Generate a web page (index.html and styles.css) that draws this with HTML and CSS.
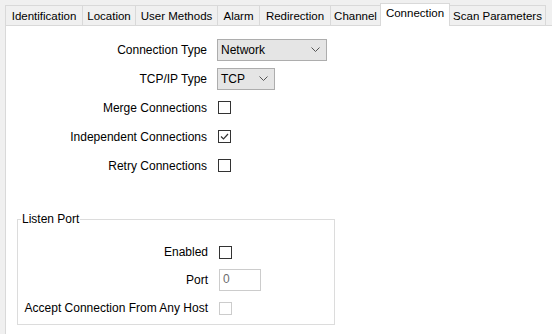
FILE: index.html
```html
<!DOCTYPE html>
<html lang="en">
<head>
  <meta charset="UTF-8">
  <title>Connection</title>
  <link rel="stylesheet" href="styles.css">
</head>
<body>
  <div class="tabs">
    <div class="tab">Identification</div>
    <div class="tab">Location</div>
    <div class="tab">User Methods</div>
    <div class="tab">Alarm</div>
    <div class="tab">Redirection</div>
    <div class="tab">Channel</div>
    <div class="tab active">Connection</div>
    <div class="tab">Scan Parameters</div>
  </div>

  <div class="panel">
    <div class="form">
      <label>Connection Type</label>
      <div class="select wide">
        <span>Network</span>
        <svg width="9" height="5" viewBox="0 0 9 5"><path d="M0.5 0.5 L4.5 4.5 L8.5 0.5" fill="none" stroke="#555" stroke-width="1"/></svg>
      </div>

      <label>TCP/IP Type</label>
      <div class="select narrow">
        <span>TCP</span>
        <svg width="9" height="5" viewBox="0 0 9 5"><path d="M0.5 0.5 L4.5 4.5 L8.5 0.5" fill="none" stroke="#555" stroke-width="1"/></svg>
      </div>

      <label>Merge Connections</label>
      <div class="check"></div>

      <label>Independent Connections</label>
      <div class="check">
        <svg width="11" height="11" viewBox="0 0 11 11"><path d="M2 5.5 L4.5 8 L9 3" fill="none" stroke="#333" stroke-width="1.2"/></svg>
      </div>

      <label>Retry Connections</label>
      <div class="check"></div>
    </div>

    <fieldset class="group">
      <legend>Listen Port</legend>
      <div class="group-form">
        <label>Enabled</label>
        <div class="check"></div>

        <label>Port</label>
        <div class="field">0</div>

        <label>Accept Connection From Any Host</label>
        <div class="check disabled"></div>
      </div>
    </fieldset>
  </div>
</body>
</html>
```

FILE: styles.css
```css
body {
  margin: 0;
  background: #f0f0f0;
  font-family: 'Liberation Sans', Arial, sans-serif;
  font-size: 12px;
  color: #000;
  height: 334px;
  overflow: hidden;
}

.tabs {
  display: flex;
  align-items: flex-end;
  height: 25px;
  padding-left: 5px;
  position: relative;
  z-index: 1;
}

.tab {
  flex-shrink: 0;
  height: 20px;
  line-height: 20px;
  border: 1px solid #d9d9d9;
  border-bottom: none;
  margin-right: -1px;
  box-sizing: border-box;
  font-size: 11.5px;
  text-align: center;
  color: #000;
  white-space: nowrap;
}

/* tab widths as in the dialog */
.tab:nth-child(1) { width: 78px; }
.tab:nth-child(2) { width: 54px; }
.tab:nth-child(3) { width: 83px; }
.tab:nth-child(4) { width: 43px; }
.tab:nth-child(5) { width: 72px; }
.tab:nth-child(6) { width: 51px; }
.tab:nth-child(7) { width: 70px; }
.tab:nth-child(8) { width: 97px; }

.tab.active {
  height: 23px;
  line-height: 19px;
  background: #fff;
  margin-bottom: -1px;
  position: relative;
  z-index: 2;
}

.panel {
  margin-left: 5px;
  background: #fff;
  border-top: 1px solid #d9d9d9;
  border-left: 1px solid #d9d9d9;
  height: 309px;
  box-sizing: border-box;
}

.form {
  display: grid;
  grid-template-columns: 201px auto;
  grid-auto-rows: 29px;
  column-gap: 10px;
  align-items: center;
  padding-top: 9px;
}

.form label,
.group-form label {
  text-align: right;
  white-space: nowrap;
}

.select {
  display: flex;
  align-items: center;
  justify-content: space-between;
  height: 22px;
  box-sizing: border-box;
  background: #e5e5e5;
  border: 1px solid #adadad;
  padding: 0 6px 0 3px;
}

.select.wide { width: 110px; }
.select.narrow { width: 58px; }

.check {
  width: 13px;
  height: 13px;
  box-sizing: border-box;
  border: 1px solid #333;
  background: #fff;
  margin-left: 1px;
  display: flex;
  align-items: center;
  justify-content: center;
}

.check.disabled {
  border-color: #ccc;
}

.group {
  margin: 32px 0 0 11px;
  width: 318px;
  box-sizing: border-box;
  border: 1px solid #dcdcdc;
  padding: 12px 0 2px 0;
}

.group legend {
  margin-left: 3px;
  padding: 0 1px;
}

.group-form {
  display: grid;
  grid-template-columns: 190px auto;
  grid-auto-rows: 28px;
  column-gap: 10px;
  align-items: center;
}

.field {
  width: 42px;
  height: 22px;
  box-sizing: border-box;
  border: 1px solid #ccc;
  color: #6d6d6d;
  padding: 2px 0 0 3px;
  margin-left: 1px;
}
```
